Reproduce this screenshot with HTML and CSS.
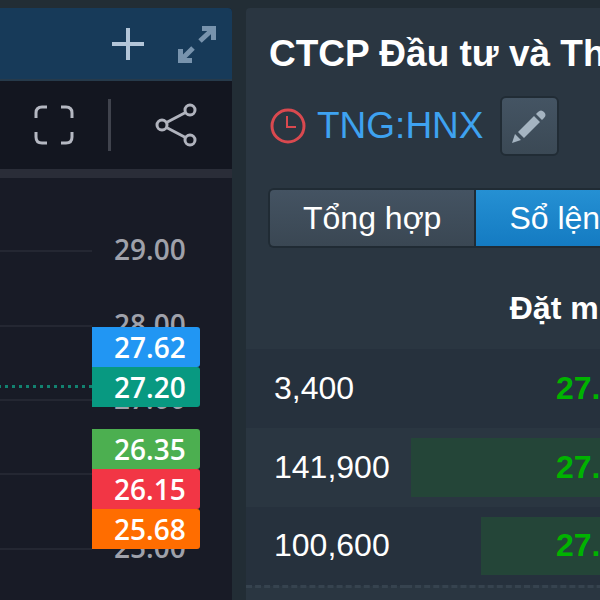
FILE: index.html
```
<!DOCTYPE html>
<html lang="vi">
<head>
  <meta charset="UTF-8">
  <meta name="viewport" content="width=device-width, initial-scale=1.0">
  <title>TNG:HNX</title>
  <link rel="stylesheet" href="styles.css">
</head>
<body>
  <div class="workspace">
    <section class="chart-panel">
      <header class="chart-header">
        <button class="icon-button" aria-label="Thêm">
          <svg width="34" height="34" viewBox="0 0 34 34" fill="none" stroke="#b3c5d8" stroke-width="4">
            <path d="M17 1v32M1 17h32"/>
          </svg>
        </button>
        <button class="icon-button" aria-label="Phóng to">
          <svg width="40" height="40" viewBox="0 0 40 40" fill="none" stroke="#7893ad" stroke-width="5">
            <path d="M25 4.500h11.500V16M36 5L23 17M15 36.500H3.500V25M4 36l12-12"/>
          </svg>
        </button>
      </header>

      <div class="toolbar">
        <button class="icon-button" aria-label="Toàn màn hình">
          <svg width="40" height="40" viewBox="0 0 40 40" fill="none" stroke="#b5b8c2" stroke-width="3">
            <path d="M2 13V8q0-6 6-6h5M27 2h5q6 0 6 6v5M38 27v5q0 6-6 6h-5M13 38H8q-6 0-6-6v-5"/>
          </svg>
        </button>
        <span class="divider"></span>
        <button class="icon-button" aria-label="Chia sẻ">
          <svg width="42" height="44" viewBox="0 0 42 44" fill="none" stroke="#b0b3bd" stroke-width="3">
            <circle cx="7" cy="22" r="5"/>
            <circle cx="35" cy="7" r="5"/>
            <circle cx="35" cy="37" r="5"/>
            <path d="M11.500 19.500l19-10M11.500 24.500l19 10"/>
          </svg>
        </button>
      </div>

      <div class="chart">
        <div class="scale">
          <div class="tick"><span>29.00</span></div>
          <div class="tick"><span>28.00</span></div>
          <div class="tick"><span>27.00</span></div>
          <div class="tick"><span>26.00</span></div>
          <div class="tick"><span>25.00</span></div>
        </div>
        <div class="tags tags-upper">
          <div class="tag blue">27.62</div>
          <div class="tag teal">27.20</div>
        </div>
        <div class="tags tags-lower">
          <div class="tag green">26.35</div>
          <div class="tag red">26.15</div>
          <div class="tag orange">25.68</div>
        </div>
      </div>
    </section>

    <section class="quote-panel">
      <h1>CTCP Đầu tư và Thương mại TNG</h1>
      <div class="symbol">
        <svg width="36" height="36" viewBox="0 0 36 36" fill="none" stroke="#d9494f" stroke-width="3">
          <circle cx="18" cy="18" r="16"/>
          <path d="M17 8v11h9" stroke-width="2"/>
        </svg>
        <a href="#">TNG:HNX</a>
        <button class="edit" aria-label="Sửa">
          <svg width="36" height="36" viewBox="0 0 36 36" fill="#a5b4c1">
            <path d="M1 35l3-9 6 6zM7 24L23 8l6 6-16 16zM25 6l2-2q3-3 6 0t0 6l-2 2z"/>
          </svg>
        </button>
      </div>

      <div class="tabs">
        <button class="tab">Tổng hợp</button>
        <button class="tab active">Sổ lệnh</button>
      </div>

      <table class="orders">
        <thead>
          <tr><th></th><th>Đặt mua</th></tr>
        </thead>
        <tbody>
          <tr>
            <td>3,400</td>
            <td class="price"><span>27.20</span></td>
          </tr>
          <tr>
            <td>141,900</td>
            <td class="price"><div class="depth" style="width: 98%"></div><span>27.10</span></td>
          </tr>
          <tr>
            <td>100,600</td>
            <td class="price"><div class="depth" style="width: 69%"></div><span>27.00</span></td>
          </tr>
        </tbody>
      </table>
    </section>
  </div>
</body>
</html>
```
FILE: styles.css
```
* {
  box-sizing: border-box;
}

body {
  margin: 0;
  background: #222d35;
  color: #fff;
  font-family: "Liberation Sans", Arial, sans-serif;
  font-size: 32px;
  overflow: hidden;
}

button {
  font: inherit;
  color: inherit;
  padding: 0;
  border: none;
  cursor: pointer;
}

svg {
  display: block;
}

.workspace {
  display: grid;
  grid-template-columns: 232px minmax(0, 1fr);
  gap: 14px;
  min-height: 100vh;
  padding-top: 8px;
}

/* Chart */
.chart-panel {
  display: flex;
  flex-direction: column;
  background: #181b26;
  border-radius: 0 4px 0 0;
  overflow: hidden;
}

.icon-button {
  background: none;
}

.chart-header {
  display: flex;
  align-items: center;
  justify-content: flex-end;
  gap: 32px;
  height: 73px;
  padding-right: 15px;
  background: #173a59;
  border-bottom: 2px solid #263a4b;
}

.toolbar {
  display: flex;
  align-items: center;
  justify-content: flex-end;
  height: 97px;
  padding-right: 35px;
  background: #131620;
  border-bottom: 9px solid #2a2d38;
}

.divider {
  width: 3px;
  height: 52px;
  margin: 0 44px 0 34px;
  background: #40434d;
}

.chart {
  position: relative;
  flex: 1;
  padding-top: 36px;
  font-family: "Open Sans", "Noto Sans", sans-serif;
  font-size: 28px;
  font-weight: 600;
}

.scale {
  display: grid;
  grid-template-rows: repeat(5, 1fr);
  height: 372px;
  color: #9fa1aa;
}

.tick {
  display: flex;
  align-items: center;
  gap: 22px;
}

.tick::before {
  content: "";
  width: 92px;
  height: 2px;
  background: #242732;
}

.tick span {
  padding-bottom: 4px;
}

/* Price tags lie over the scale */
.tags {
  position: absolute;
  left: 92px;
  width: 108px;
}

.tags-upper {
  top: 149px;
}

.tags-lower {
  top: 251px;
}

.tag {
  position: relative;
  height: 40px;
  padding-left: 22px;
  border-radius: 0 3px 3px 0;
  line-height: 40px;
}

.blue {
  background: #2196f3;
}

.teal {
  background: #089981;
}

.teal::before {
  content: "";
  position: absolute;
  top: 18px;
  right: 100%;
  width: 92px;
  height: 3px;
  background: repeating-linear-gradient(to left, #128270 0 3px, transparent 3px 7px);
}

.green {
  background: #4caf50;
}

.red {
  background: #f23645;
}

.orange {
  background: #ff6d00;
}

/* Quote */
.quote-panel {
  padding-top: 24px;
  background: #2a3641;
  border-radius: 4px 0 0 0;
  overflow: hidden;
  white-space: nowrap;
}

h1 {
  margin: 0 0 20px 23px;
  font-size: 37px;
  line-height: 44px;
}

.symbol {
  display: flex;
  align-items: center;
  gap: 11px;
  margin-left: 24px;
}

.symbol a {
  color: #3ea2f0;
  font-size: 37px;
  line-height: 40px;
  text-decoration: none;
}

.edit {
  display: grid;
  place-items: center;
  width: 59px;
  height: 60px;
  margin-left: 5px;
  background: linear-gradient(#445463, #3b4955);
  border: 2px solid #212c35;
  border-radius: 6px;
}

.tabs {
  display: flex;
  margin: 32px 0 0 22px;
}

.tab {
  flex: none;
  height: 60px;
  padding: 0 33px;
  background: linear-gradient(#445362, #3a4753);
  border: 2px solid #202b34;
}

.tab:first-child {
  border-right: 0;
  border-radius: 6px 0 0 6px;
}

.tab.active {
  background: linear-gradient(#2590d3, #147bc2);
}

/* The order book runs on past the right edge of the window */
.orders {
  width: calc(100% + 48px);
  table-layout: fixed;
  border-collapse: collapse;
  border-bottom: 3px dashed #36434f;
}

.orders th {
  height: 101px;
  padding: 20px 12px 0;
  text-align: right;
}

.orders th:first-child {
  width: 160px;
}

.orders td {
  height: 79px;
  padding: 0 0 0 28px;
}

.orders tbody tr:nth-child(odd) {
  background: #26313d;
}

.orders .price {
  position: relative;
  padding-right: 12px;
  color: #00b300;
  font-weight: bold;
  text-align: right;
}

.price span {
  position: relative;
}

.depth {
  position: absolute;
  top: 10px;
  right: 0;
  bottom: 10px;
  background: #244538;
}
```
